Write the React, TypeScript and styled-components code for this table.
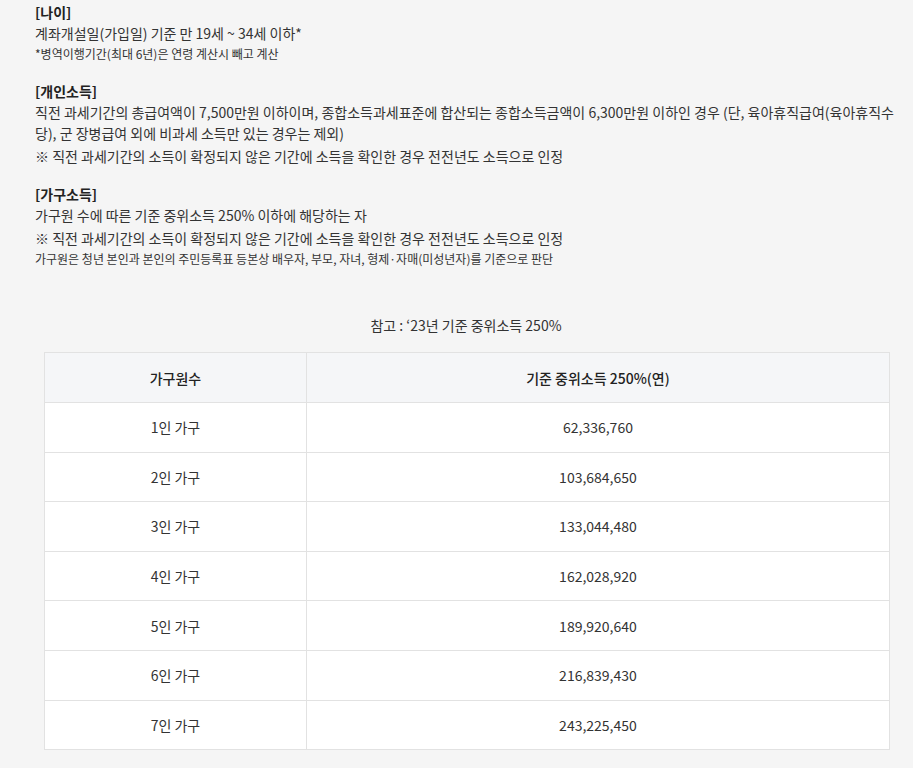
import styled, { createGlobalStyle } from "styled-components";

const GlobalStyle = createGlobalStyle`
  html, body {
    margin: 0;
    padding: 0;
    background: #f5f5f5;
  }
  body {
    font-family: "Noto Sans CJK KR", "Noto Sans", sans-serif;
    color: #333;
  }
`;

const incomeRows = [
  { size: "1인 가구", amount: "62,336,760" },
  { size: "2인 가구", amount: "103,684,650" },
  { size: "3인 가구", amount: "133,044,480" },
  { size: "4인 가구", amount: "162,028,920" },
  { size: "5인 가구", amount: "189,920,640" },
  { size: "6인 가구", amount: "216,839,430" },
  { size: "7인 가구", amount: "243,225,450" },
];

const App = () => {
  return (
    <>
      <GlobalStyle />
      <Page>
        <Conditions>
          <Section>
            <SectionTitle>[나이]</SectionTitle>
            <Body>계좌개설일(가입일) 기준 만 19세 ~ 34세 이하*</Body>
            <SmallNote>*병역이행기간(최대 6년)은 연령 계산시 빼고 계산</SmallNote>
          </Section>

          <Section>
            <SectionTitle>[개인소득]</SectionTitle>
            <Body>
              직전 과세기간의 총급여액이 7,500만원 이하이며, 종합소득과세표준에 합산되는 종합소득금액이 6,300만원 이하인 경우 (단, 육아휴직급여(육아휴직수당), 군 장병급여 외에 비과세 소득만 있는 경우는 제외)
            </Body>
            <Remark>※ 직전 과세기간의 소득이 확정되지 않은 기간에 소득을 확인한 경우 전전년도 소득으로 인정</Remark>
          </Section>

          <Section>
            <SectionTitle>[가구소득]</SectionTitle>
            <Body>가구원 수에 따른 기준 중위소득 250% 이하에 해당하는 자</Body>
            <Remark>※ 직전 과세기간의 소득이 확정되지 않은 기간에 소득을 확인한 경우 전전년도 소득으로 인정</Remark>
            <SmallNote>가구원은 청년 본인과 본인의 주민등록표 등본상 배우자, 부모, 자녀, 형제·자매(미성년자)를 기준으로 판단</SmallNote>
          </Section>
        </Conditions>

        <Caption>참고 : ‘23년 기준 중위소득 250%</Caption>

        <Table>
          <colgroup>
            <col style={{ width: "31%" }} />
            <col />
          </colgroup>
          <thead>
            <tr>
              <HeadCell>가구원수</HeadCell>
              <HeadCell>기준 중위소득 250%(연)</HeadCell>
            </tr>
          </thead>
          <tbody>
            {incomeRows.map((row) => (
              <tr key={row.size}>
                <Cell>{row.size}</Cell>
                <Cell>{row.amount}</Cell>
              </tr>
            ))}
          </tbody>
        </Table>
      </Page>
    </>
  );
};

export default App;

const Page = styled.div`
  padding: 2px 24px 18px 35px;
`;

const Conditions = styled.div`
  display: flex;
  flex-direction: column;
  gap: 17px;
  width: 872px;
`;

const Section = styled.div`
  display: flex;
  flex-direction: column;
`;

const SectionTitle = styled.h3`
  margin: 0;
  font-size: 14px;
  line-height: 21px;
  font-weight: 700;
  color: #222;
`;

const Body = styled.p`
  margin: 0;
  font-size: 14px;
  line-height: 21px;
`;

const Remark = styled.p`
  margin: 2px 0 0;
  font-size: 14px;
  line-height: 21px;
`;

const SmallNote = styled.p`
  margin: 0;
  font-size: 12px;
  line-height: 20px;
`;

const Caption = styled.p`
  margin: 46px 0 16px;
  padding-left: 8px;
  text-align: center;
  font-size: 14px;
  line-height: 21px;
`;

const Table = styled.table`
  margin-left: 9px;
  width: 846px;
  border-collapse: collapse;
  table-layout: fixed;
  background: #fff;
  border: 1px solid #e2e2e2;
`;

const HeadCell = styled.th`
  height: 49px;
  padding: 0;
  background: #f5f6f8;
  border: 1px solid #e2e2e2;
  font-size: 14px;
  font-weight: 500;
  color: #222;
  text-align: center;
`;

const Cell = styled.td`
  height: 48.6px;
  padding: 0;
  border: 1px solid #e2e2e2;
  font-size: 14px;
  text-align: center;
`;
